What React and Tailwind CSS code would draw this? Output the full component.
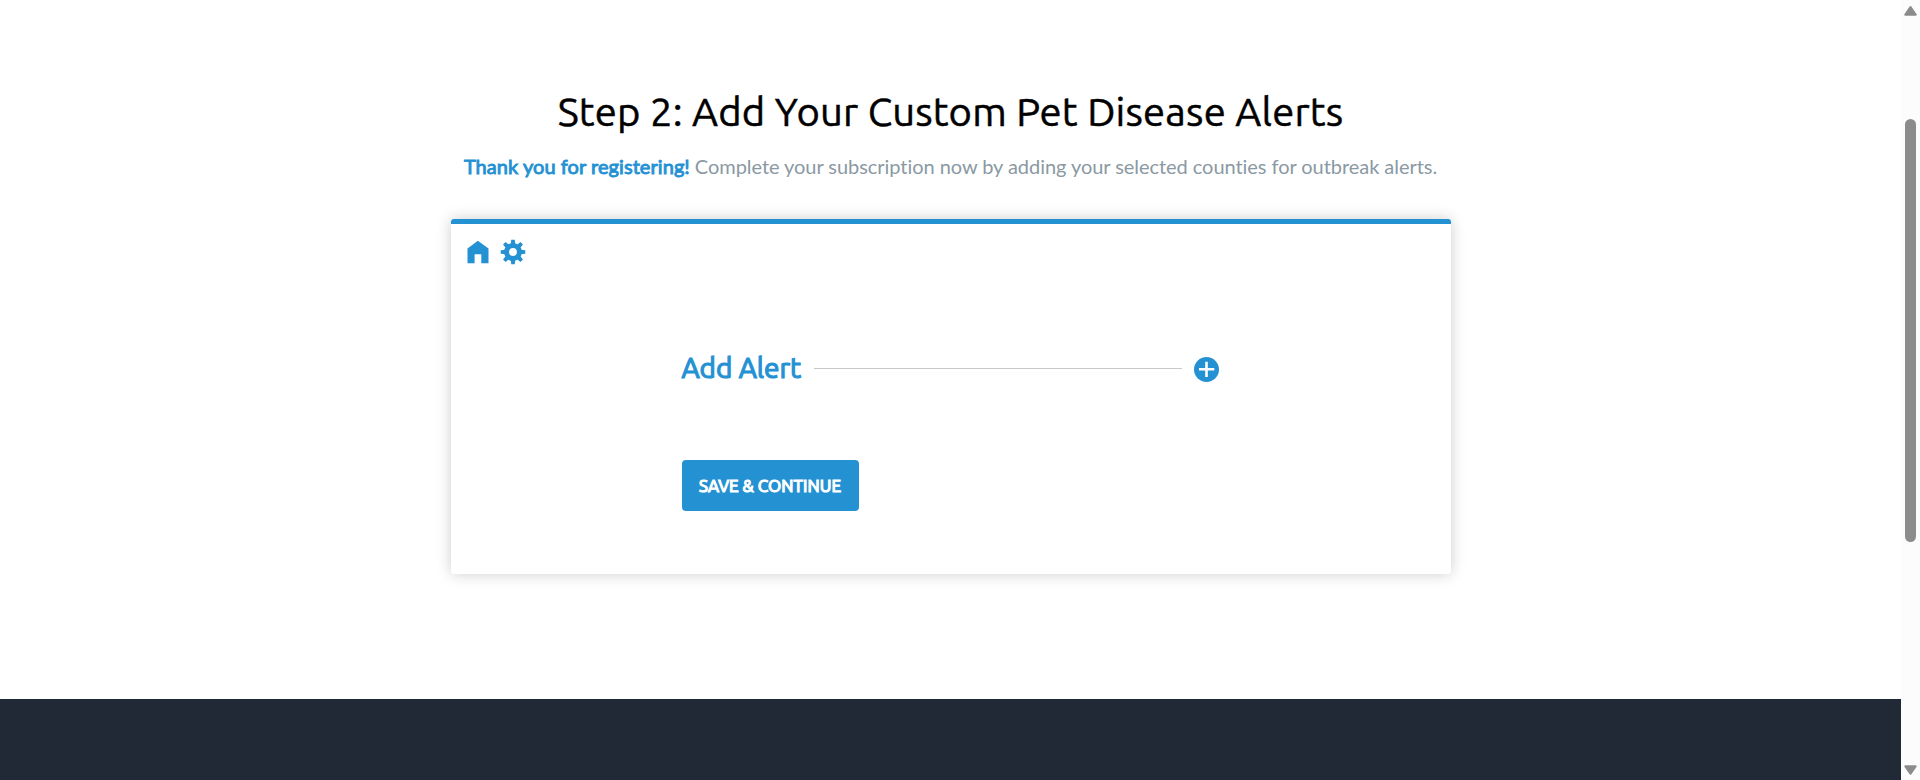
import React from "react";

function HomeIcon() {
  return (
    <svg className="h-[24px] w-[22px]" viewBox="0 0 22 24" fill="#2491d3" aria-hidden="true">
      <path d="M10.9.8 21.5 8.4V23.2H14.3V14.2H7.6V23.2H.5V8.4Z" />
    </svg>
  );
}

function GearIcon() {
  const teeth = [0, 45, 90, 135, 180, 225, 270, 315];
  return (
    <svg className="h-[26px] w-[26px]" viewBox="-13 -13 26 26" fill="#2491d3" aria-hidden="true">
      {teeth.map((a) => (
        <path key={a} transform={`rotate(${a})`} d="M-2.3-7 L-1.8-12.3 H1.8 L2.3-7Z" />
      ))}
      <circle r="6.4" fill="none" stroke="#2491d3" strokeWidth="5" />
    </svg>
  );
}

function PlusIcon() {
  return (
    <svg className="h-[25px] w-[25px]" viewBox="0 0 25 25" aria-hidden="true">
      <circle cx="12.5" cy="12.5" r="12.5" fill="#2491d3" />
      <path d="M12.5 4.7V20M5 12.3H20.3" stroke="#fff" strokeWidth="2.6" />
    </svg>
  );
}

function Scrollbar() {
  return (
    <div className="flex h-full w-[19px] shrink-0 flex-col items-center bg-[#fcfcfc]">
      <svg className="mt-[5px] h-[12px] w-[13px] shrink-0" viewBox="0 0 13 12" fill="#8b8b8b" aria-hidden="true">
        <path d="M5.6 1.5Q6.5.5 7.4 1.5L12.6 9.2Q13 10.7 11.6 10.8H1.4Q0 10.7.4 9.2Z" />
      </svg>
      <div className="mt-[102px] h-[423px] w-[11px] shrink-0 rounded-full bg-[#8b8b8b]" />
      <svg className="mt-auto mb-[4px] h-[12px] w-[13px] shrink-0" viewBox="0 0 13 12" fill="#8b8b8b" aria-hidden="true">
        <path d="M5.6 10.2Q6.5 11.2 7.4 10.2L12.6 2.8Q13 1.3 11.6 1.2H1.4Q0 1.3.4 2.8Z" />
      </svg>
    </div>
  );
}

export default function App() {
  return (
    <div className="flex h-[780px] w-full overflow-hidden bg-white">
      <div className="flex min-w-0 flex-1 flex-col">
        <main className="flex h-[699px] flex-col items-center pt-[84px]">
          <h1 className="h-[56px] font-['Ubuntu','Noto_Sans',sans-serif] text-[40px] leading-[56px] tracking-[0.2px] whitespace-nowrap text-black [-webkit-text-stroke:0.5px_#000]">
            Step 2: Add Your Custom Pet Disease Alerts
          </h1>
          <p className="mt-[11px] h-[30px] font-['Lato',sans-serif] text-[20px] leading-[30px] tracking-[-0.05px] whitespace-nowrap text-[#8a99a3]">
            <span className="tracking-[0.06px] text-[#2491d3] [-webkit-text-stroke:0.9px_#2491d3]">Thank you for registering!</span>{" "}
            Complete your subscription now by adding your selected counties for outbreak alerts.
          </p>
          <section className="mt-[38px] h-[355px] w-[1000px] rounded-[3px] border-t-[5px] border-[#2491d3] bg-white shadow-[0_0_15px_rgba(0,0,0,0.2)]">
            <div className="flex h-[56px] items-center gap-[11px] pl-[16px]">
              <HomeIcon />
              <GearIcon />
            </div>
            <div className="mt-[67px] ml-[231px] flex h-[42px] w-[537px] items-center">
              <h2 className="w-[132px] font-['Ubuntu','Noto_Sans',sans-serif] text-[28px] leading-[42px] tracking-[-0.05px] whitespace-nowrap text-[#2491d3] [-webkit-text-stroke:1.2px_#2491d3]">
                Add Alert
              </h2>
              <div className="h-px w-[368px] bg-[#c8c8c8]" />
              <div className="ml-auto pt-[2px]">
                <PlusIcon />
              </div>
            </div>
            <button className="mt-[71px] ml-[231px] h-[51px] w-[177px] rounded-[4px] bg-[#2491d3] pt-px font-['Ubuntu','Noto_Sans',sans-serif] text-[17px] tracking-[0.08px] whitespace-nowrap text-white [-webkit-text-stroke:1.2px_#fff]">
              SAVE &amp; CONTINUE
            </button>
          </section>
        </main>
        <footer className="flex-1 bg-[#212936]" />
      </div>
      <Scrollbar />
    </div>
  );
}
